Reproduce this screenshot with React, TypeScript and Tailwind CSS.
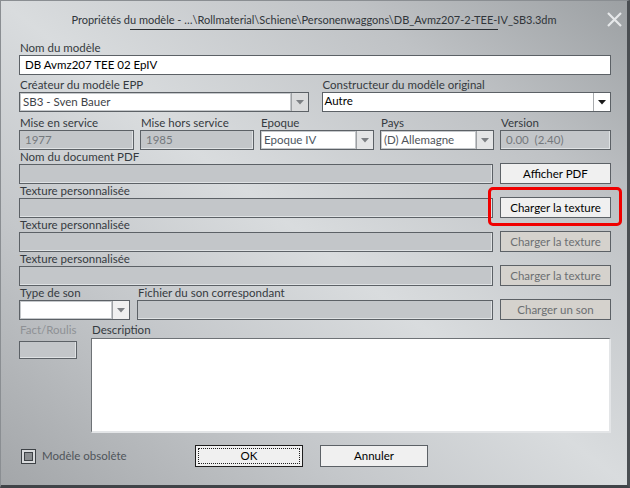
import React from "react";

const font = { fontFamily: "Lato, 'Noto Sans', sans-serif" };

function Label({ children, dim }: { children: React.ReactNode; dim?: boolean }) {
  return (
    <div className={`h-[14px] text-[11.5px] leading-[14px] pl-px whitespace-nowrap ${dim ? "text-[#8e9195]" : "text-[#353a40]"}`}>
      {children}
    </div>
  );
}

function Field({ value, white }: { value?: string; white?: boolean }) {
  return (
    <div
      className={`h-[20px] border border-[#5c6166] px-[5px] text-[11.5px] leading-[18px] whitespace-pre ${
        white ? "bg-white text-black" : "bg-[#c3c6c9] text-[#74787c] shadow-[inset_-1px_-1px_0_#dfe2e4]"
      }`}
    >
      {value}
    </div>
  );
}

function Arrow({ dark }: { dark?: boolean }) {
  return (
    <svg width="8" height="5" viewBox="0 0 8 5">
      <path d="M0 0h8L4 4.5z" fill={dark ? "#1a1a1a" : "#7d8084"} />
    </svg>
  );
}

function Combo({ value, active, tone = "#4a4f55", btn = "#dcdddf" }: { value: string; active?: boolean; tone?: string; btn?: string }) {
  return (
    <div className="h-[20px] flex border border-[#5c6166] bg-white">
      <div
        className={`flex-1 min-w-0 text-[11.5px] leading-[16px] px-[2px] whitespace-nowrap ${active ? "" : "border border-[#c5c8cb]"}`}
        style={{ color: tone }}
      >
        {value}
      </div>
      <div
        className={`w-[17px] flex items-center justify-center ${active ? "bg-white border-l border-[#a8abae]" : "border-l border-[#9ea1a4]"}`}
        style={{ background: active ? undefined : btn }}
      >
        <Arrow dark={active} />
      </div>
    </div>
  );
}

function Btn({ children, disabled, className = "" }: { children: React.ReactNode; disabled?: boolean; className?: string }) {
  return (
    <div
      className={`h-[21px] w-[111px] border border-[#5c6166] flex items-center justify-center text-[11.5px] whitespace-nowrap ${
        disabled ? "bg-[#d5d2cd] text-[#6c6f72]" : "bg-[#f0f0f0] text-black"
      } ${className}`}
    >
      {children}
    </div>
  );
}

function FileRow({ label, button, disabled, highlight }: { label: string; button: string; disabled?: boolean; highlight?: boolean }) {
  return (
    <div className="flex items-end gap-[7px]">
      <div className="flex-1 min-w-0">
        <Label>{label}</Label>
        <Field />
      </div>
      <div className="relative">
        <Btn disabled={disabled}>{button}</Btn>
        {highlight && (
          <div className="absolute left-[-12px] top-[-10px] w-[134px] h-[39px] border-[3px] border-[#f00000] rounded-[5px]" />
        )}
      </div>
    </div>
  );
}

export default function App() {
  return (
    <div
      className="relative w-[630px] h-[488px] overflow-hidden border-l border-t border-[#8a8e92] border-r-[3px] border-b-[3px] border-r-[#4a4e52] border-b-[#404448] bg-[linear-gradient(to_bottom_left,#9ca0a3_0%,#bfc2c5_22%,#d9dcde_50%,#c4c7ca_72%,#a3a6a9_100%)]"
      style={font}
    >
      {/* title bar */}
      <div className="relative h-[40px] flex flex-col items-center pt-[12px]">
        <div className="text-[11px] leading-[14px] text-[#30353a] whitespace-nowrap">
          Propriétés du modèle - …\Rollmaterial\Schiene\Personenwaggons\DB_Avmz207-2-TEE-IV_SB3.3dm
        </div>
        <div className="mt-[2px] w-[368px] h-px bg-[#2a2e32]" />
        <svg className="absolute right-[5px] top-[11px]" width="15" height="15" viewBox="0 0 15 15">
          <path d="M1 1L14 14M14 1L1 14" stroke="#e6e8ea" strokeWidth="2.2" />
        </svg>
      </div>

      <div className="pl-[18px] pr-[16px]">
        <Label>Nom du modèle</Label>
        <Field white value="DB Avmz207 TEE 02 EpIV" />

        <div className="mt-[3px] grid grid-cols-2 gap-x-[13px]">
          <div>
            <Label>Créateur du modèle EPP</Label>
            <Combo value="SB3 - Sven Bauer" tone="#3e4348" btn="#dadbdc" />
          </div>
          <div>
            <Label>Constructeur du modèle original</Label>
            <Combo value="Autre" active tone="#000" />
          </div>
        </div>

        <div className="mt-[4px] grid grid-cols-[115px_114px_114px_114px_1fr] gap-x-[6px]">
          <div>
            <Label>Mise en service</Label>
            <Field value="1977" />
          </div>
          <div>
            <Label>Mise hors service</Label>
            <Field value="1985" />
          </div>
          <div>
            <Label>Epoque</Label>
            <Combo value="Epoque IV" tone="#4c5661" btn="#e4e5e6" />
          </div>
          <div>
            <Label>Pays</Label>
            <Combo value="(D) Allemagne" tone="#50545a" btn="#e4e5e6" />
          </div>
          <div>
            <Label>Version</Label>
            <Field value="0.00  (2.40)" />
          </div>
        </div>

        <FileRow label="Nom du document PDF" button="Afficher PDF" />
        <FileRow label="Texture personnalisée" button="Charger la texture" highlight />
        <FileRow label="Texture personnalisée" button="Charger la texture" disabled />
        <FileRow label="Texture personnalisée" button="Charger la texture" disabled />

        <div className="flex items-end gap-[7px]">
          <div className="w-[111px]">
            <Label>Type de son</Label>
            <Combo value="" tone="#000" btn="#f0f0f0" />
          </div>
          <div className="flex-1 min-w-0">
            <Label>Fichier du son correspondant</Label>
            <Field />
          </div>
          <Btn disabled>Charger un son</Btn>
        </div>

        <div className="mt-[3px] flex gap-[14px]">
          <div className="w-[58px]">
            <Label dim>Fact/Roulis</Label>
            <div className="mt-[4px] h-[18px] border border-[#5c6166] bg-[#c3c6c9] shadow-[inset_-1px_-1px_0_#dfe2e4]" />
          </div>
          <div className="flex-1">
            <Label>Description</Label>
            <div className="mt-px h-[95px] bg-white border-t border-l border-[#6e7276] border-r-2 border-b-2 border-r-[#e3e5e7] border-b-[#e3e5e7]" />
          </div>
        </div>

        <div className="mt-[12px] flex items-center">
          <div className="w-[176px] flex items-center gap-[6px] pl-[2px]">
            <div className="w-[15px] h-[15px] border border-[#3e4246] bg-[#d8dadc] p-[2px]">
              <div className="w-full h-full border border-[#3e4246] bg-[#8a8d90]" />
            </div>
            <span className="text-[11.5px] text-[#4f545a]">Modèle obsolète</span>
          </div>
          <div className="w-[108px] h-[22px] border border-[#1e1e1e] bg-[#f0f0f0] p-[2px]">
            <div className="w-full h-full border border-dotted border-[#202020] flex items-center justify-center text-[11.5px] text-black">
              OK
            </div>
          </div>
          <div className="ml-[17px] w-[108px] h-[22px] border border-[#5c6166] bg-[#f0f0f0] flex items-center justify-center text-[11.5px] text-black">
            Annuler
          </div>
        </div>
      </div>
    </div>
  );
}
